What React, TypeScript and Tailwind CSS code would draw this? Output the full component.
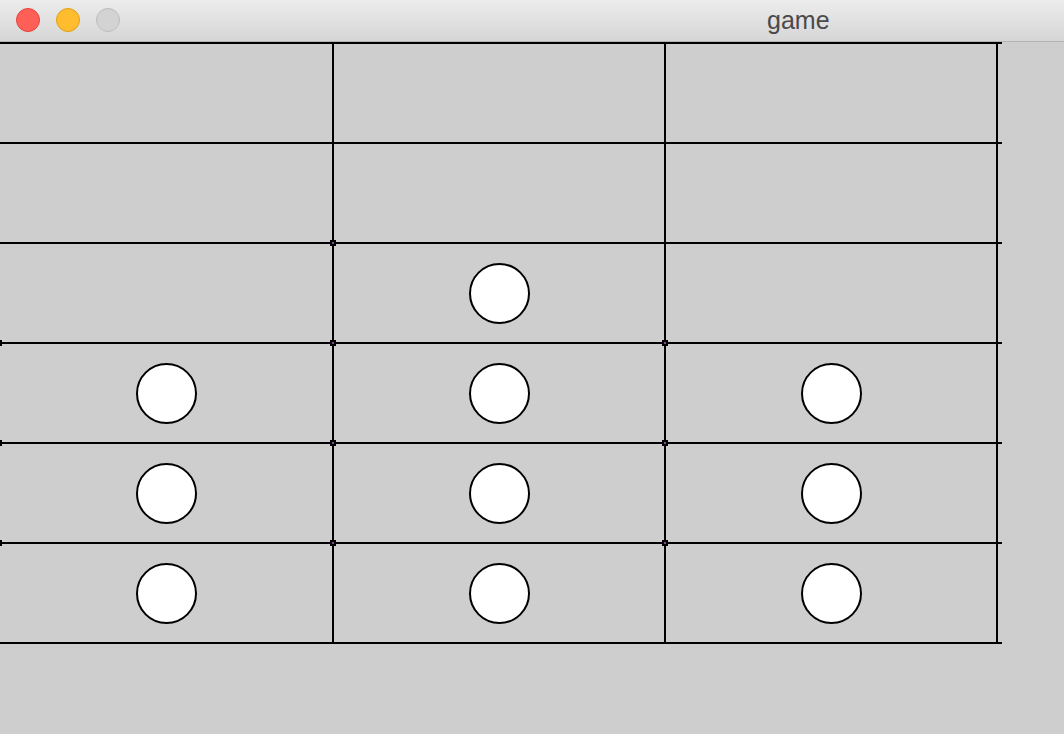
import React from 'react';

const ROWS = 6;
const COLS = 3;

// which cells hold a piece: [row][col]
const pieces: boolean[][] = [
  [false, false, false],
  [false, false, false],
  [false, true, false],
  [true, true, true],
  [true, true, true],
  [true, true, true],
];

const TitleBar: React.FC = () => (
  <div className="relative h-[42px] border-b border-[#b3b3b3] bg-gradient-to-b from-[#ececec] to-[#d6d6d6]">
    <div className="absolute left-[16px] top-[8px] flex gap-[16px]">
      <span className="h-[24px] w-[24px] rounded-full border border-[#e2463f] bg-[#fe5f57]" />
      <span className="h-[24px] w-[24px] rounded-full border border-[#e1a116] bg-[#febc2e]" />
      <span className="h-[24px] w-[24px] rounded-full border border-[#bdbdbd] bg-[#d3d3d3]" />
    </div>
    <div
      className="absolute left-[767px] top-[4px] text-[25px] leading-[32px] text-[#4a4a4a]"
      style={{ fontFamily: '"Liberation Sans", Arial, sans-serif' }}
    >
      game
    </div>
  </div>
);

const Cell: React.FC<{ col: number; filled: boolean }> = ({ col, filled }) => (
  <div
    className={`relative flex h-full items-center justify-center border-r-2 border-black ${
      col === 0 ? 'w-[334px]' : 'w-[332px]'
    }`}
  >
    {filled && (
      <>
        <span className="absolute left-[-4px] top-[-4px] flex h-[6px] w-[6px] items-center justify-center bg-black">
          <span className="h-[2px] w-[2px] bg-[#7a4c9a]" />
        </span>
        <span className="h-[61px] w-[61px] rounded-full border-2 border-black bg-white" />
      </>
    )}
  </div>
);

export default function App() {
  return (
    <div className="h-[734px] w-[1064px] overflow-hidden bg-[#cecece]">
      <TitleBar />
      <div className="w-[1002px] border-b-2 border-black">
        {Array.from({ length: ROWS }).map((_, r) => (
          <div key={r} className="flex h-[100px] border-t-2 border-black">
            {Array.from({ length: COLS }).map((_, c) => (
              <Cell key={c} col={c} filled={pieces[r][c]} />
            ))}
          </div>
        ))}
      </div>
    </div>
  );
}
